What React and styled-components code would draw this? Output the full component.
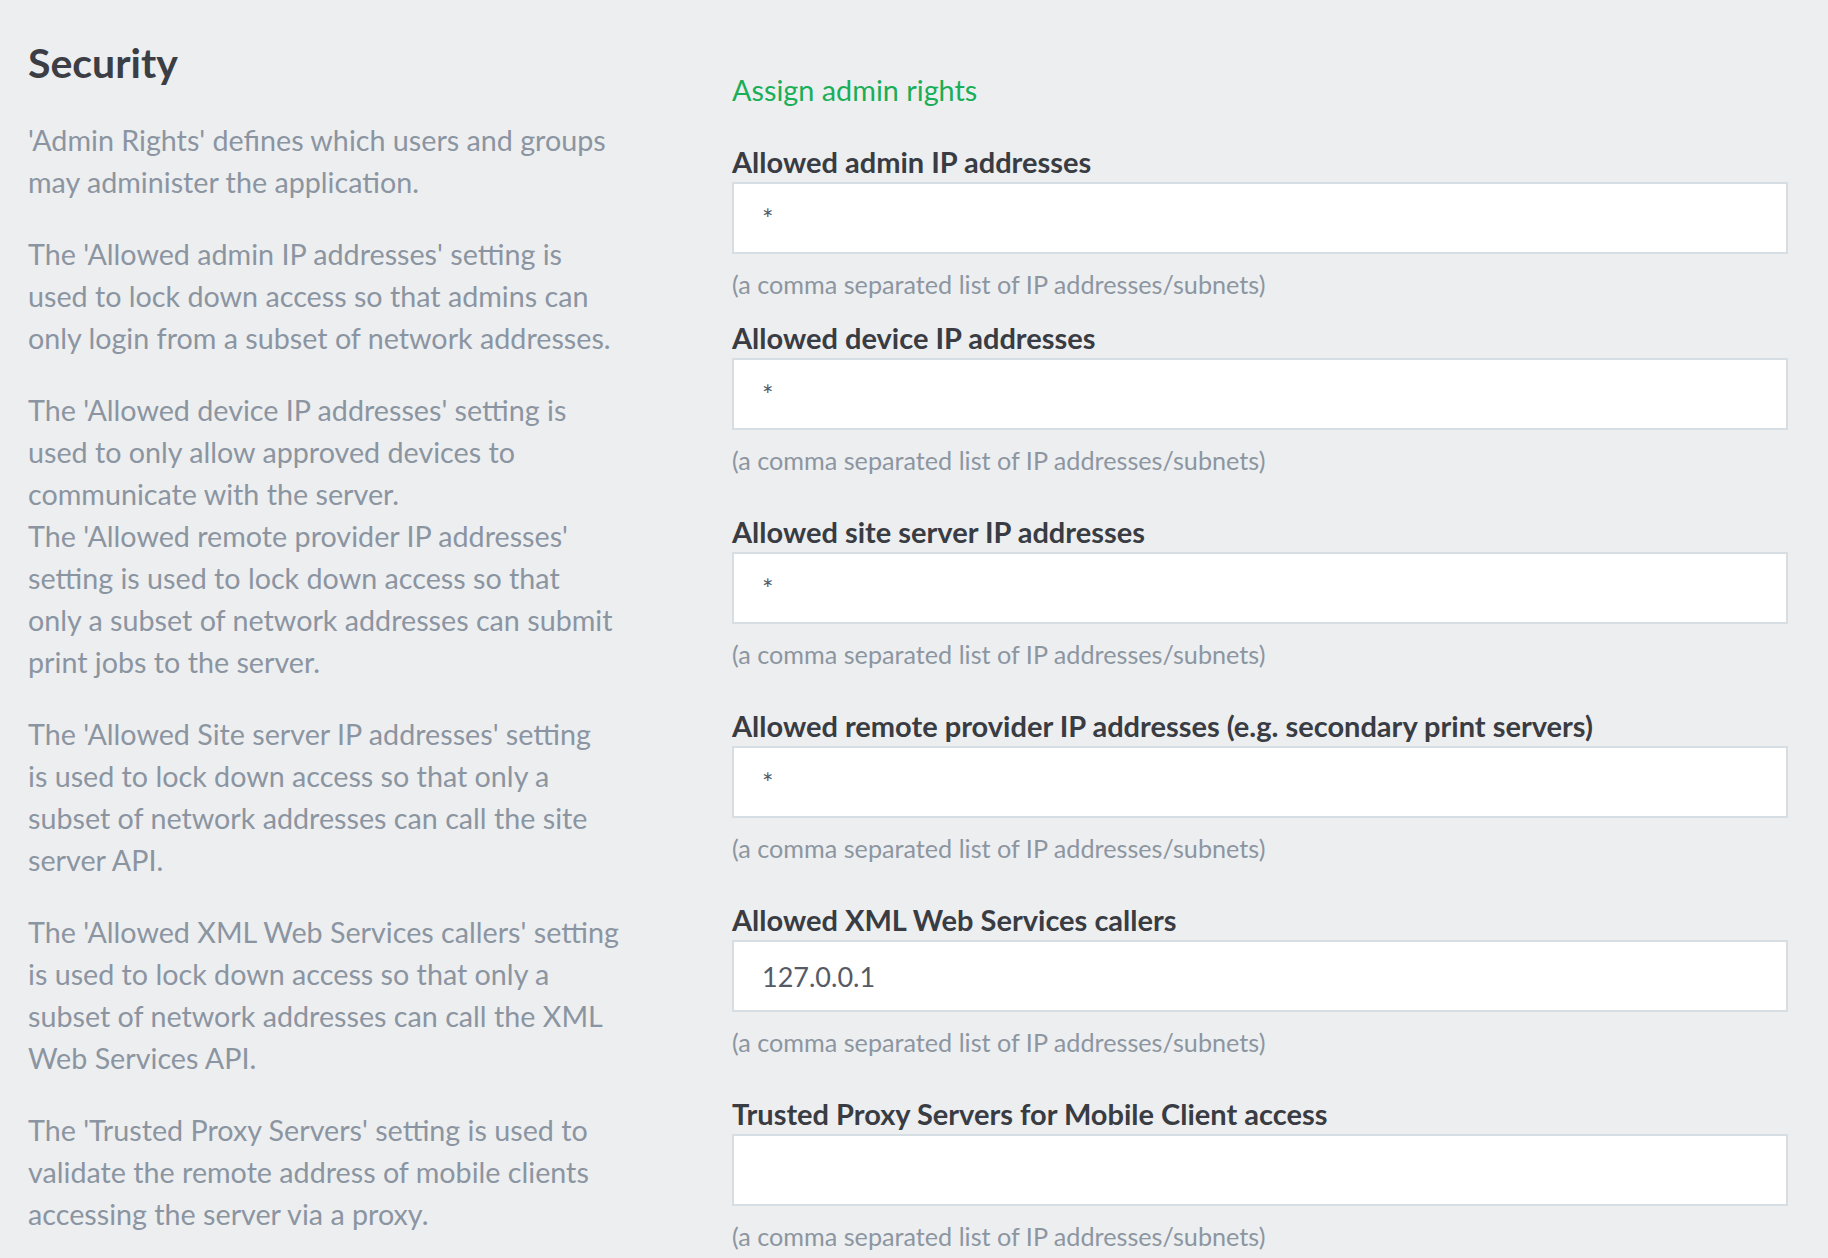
import React from "react";
import styled, { createGlobalStyle } from "styled-components";

const GlobalStyle = createGlobalStyle`
    html, body {
        margin: 0;
        padding: 0;
        background-color: #edeef0;
        font-family: Lato, "Open Sans", sans-serif;
    }
`;

const Page = styled.div`
    display: grid;
    grid-template-columns: 616px 1056px;
    column-gap: 88px;
    padding: 39px 40px 0 28px;
    min-height: 1258px;
    box-sizing: border-box;
`;

const Side = styled.aside`
    display: flex;
    flex-direction: column;
`;

const Heading = styled.h1`
    margin: 0 0 32px;
    font-size: 41px;
    line-height: 48px;
    font-weight: 700;
    color: #3b3e45;
`;

const Text = styled.p`
    margin: 0 0 30px;
    font-size: 28.7px;
    line-height: 42px;
    color: #8b95a1;
    white-space: nowrap;
`;

const FormArea = styled.form`
    display: flex;
    flex-direction: column;
    padding-top: 35px;
`;

const Link = styled.a`
    display: block;
    margin-bottom: 40px;
    font-size: 28.8px;
    line-height: 32px;
    color: #1aae58;
    text-decoration: none;
    cursor: pointer;
`;

const Field = styled.div`
    display: flex;
    flex-direction: column;
    margin-bottom: ${(p) => (p.tight ? "24px" : "42px")};
`;

const Label = styled.label`
    font-size: 29px;
    line-height: 32px;
    font-weight: 700;
    color: #393c42;
`;

const Input = styled.input`
    margin-top: 4px;
    height: 72px;
    box-sizing: border-box;
    border: 2px solid #d6dde3;
    border-radius: 0;
    background: #fff;
    padding: 0 28px;
    font-family: Lato, "Open Sans", sans-serif;
    font-size: 27px;
    color: #555a66;
    outline: none;
`;

const Hint = styled.span`
    margin-top: 16px;
    font-size: 25.2px;
    line-height: 28px;
    color: #8c96a1;
`;

const fields = [
    { label: "Allowed admin IP addresses", value: "*", tight: true },
    { label: "Allowed device IP addresses", value: "*" },
    { label: "Allowed site server IP addresses", value: "*" },
    { label: "Allowed remote provider IP addresses (e.g. secondary print servers)", value: "*" },
    { label: "Allowed XML Web Services callers", value: "127.0.0.1" },
    { label: "Trusted Proxy Servers for Mobile Client access", value: "" },
];

const App = () => {
    return (
        <>
            <GlobalStyle />
            <Page>
                <Side>
                    <Heading>Security</Heading>
                    <Text>
                        'Admin Rights' defines which users and groups<br />
                        may administer the application.
                    </Text>
                    <Text>
                        The 'Allowed admin IP addresses' setting is<br />
                        used to lock down access so that admins can<br />
                        only login from a subset of network addresses.
                    </Text>
                    <Text>
                        The 'Allowed device IP addresses' setting is<br />
                        used to only allow approved devices to<br />
                        communicate with the server.<br />
                        The 'Allowed remote provider IP addresses'<br />
                        setting is used to lock down access so that<br />
                        only a subset of network addresses can submit<br />
                        print jobs to the server.
                    </Text>
                    <Text>
                        The 'Allowed Site server IP addresses' setting<br />
                        is used to lock down access so that only a<br />
                        subset of network addresses can call the site<br />
                        server API.
                    </Text>
                    <Text>
                        The 'Allowed XML Web Services callers' setting<br />
                        is used to lock down access so that only a<br />
                        subset of network addresses can call the XML<br />
                        Web Services API.
                    </Text>
                    <Text>
                        The 'Trusted Proxy Servers' setting is used to<br />
                        validate the remote address of mobile clients<br />
                        accessing the server via a proxy.
                    </Text>
                </Side>
                <FormArea onSubmit={(e) => e.preventDefault()}>
                    <Link>Assign admin rights</Link>
                    {fields.map((f) => (
                        <Field key={f.label} tight={f.tight}>
                            <Label>{f.label}</Label>
                            <Input defaultValue={f.value} />
                            <Hint>(a comma separated list of IP addresses/subnets)</Hint>
                        </Field>
                    ))}
                </FormArea>
            </Page>
        </>
    );
};

export default App;
